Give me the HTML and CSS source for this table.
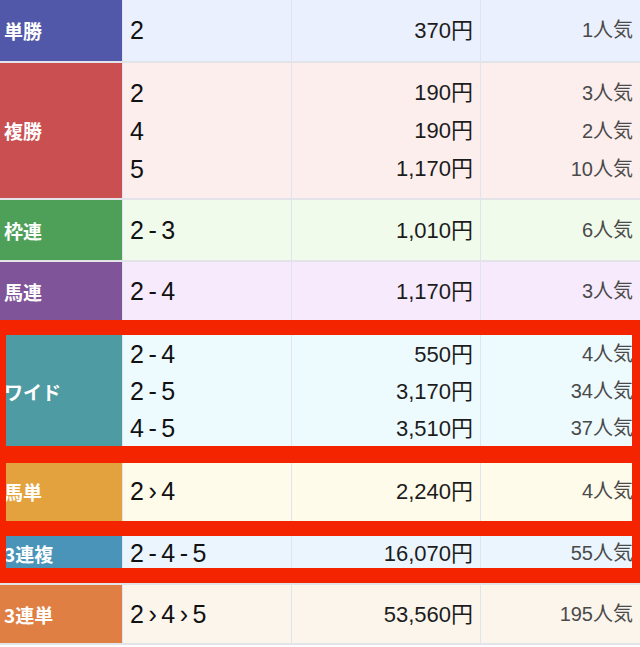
FILE: index.html
```html
<!DOCTYPE html>
<html lang="ja">
<head>
<meta charset="utf-8">
<title>払戻金</title>
<link rel="stylesheet" href="styles.css">
</head>
<body>
<div class="page">
  <div class="table">
    <div class="row r-tansho">
      <div class="label">単勝</div>
      <div class="cell combo"><div>2</div></div>
      <div class="cell pay"><div>370円</div></div>
      <div class="cell pop"><div>1人気</div></div>
    </div>
    <div class="row r-fukusho">
      <div class="label">複勝</div>
      <div class="cell combo"><div>2</div><div>4</div><div>5</div></div>
      <div class="cell pay"><div>190円</div><div>190円</div><div>1,170円</div></div>
      <div class="cell pop"><div>3人気</div><div>2人気</div><div>10人気</div></div>
    </div>
    <div class="row r-wakuren">
      <div class="label">枠連</div>
      <div class="cell combo"><div>2-3</div></div>
      <div class="cell pay"><div>1,010円</div></div>
      <div class="cell pop"><div>6人気</div></div>
    </div>
    <div class="row r-umaren">
      <div class="label">馬連</div>
      <div class="cell combo"><div>2-4</div></div>
      <div class="cell pay"><div>1,170円</div></div>
      <div class="cell pop"><div>3人気</div></div>
    </div>
    <div class="row r-wide">
      <div class="label">ワイド</div>
      <div class="cell combo"><div>2-4</div><div>2-5</div><div>4-5</div></div>
      <div class="cell pay"><div>550円</div><div>3,170円</div><div>3,510円</div></div>
      <div class="cell pop"><div>4人気</div><div>34人気</div><div>37人気</div></div>
    </div>
    <div class="row r-umatan">
      <div class="label">馬単</div>
      <div class="cell combo"><div>2›4</div></div>
      <div class="cell pay"><div>2,240円</div></div>
      <div class="cell pop"><div>4人気</div></div>
    </div>
    <div class="row r-sanpuku">
      <div class="label">3連複</div>
      <div class="cell combo"><div>2-4-5</div></div>
      <div class="cell pay"><div>16,070円</div></div>
      <div class="cell pop"><div>55人気</div></div>
    </div>
    <div class="row r-santan">
      <div class="label">3連単</div>
      <div class="cell combo"><div>2›4›5</div></div>
      <div class="cell pay"><div>53,560円</div></div>
      <div class="cell pop"><div>195人気</div></div>
    </div>
  </div>
  <div class="marks">
    <div class="bar bar-top"></div>
    <div class="hole hole-wide"></div>
    <div class="bar bar-mid1"></div>
    <div class="hole hole-umatan"></div>
    <div class="bar bar-mid2"></div>
    <div class="hole hole-sanpuku"></div>
    <div class="bar bar-bottom"></div>
  </div>
</div>
</body>
</html>
```
FILE: styles.css
```css
html, body {
  margin: 0;
  padding: 0;
  background: #ffffff;
}

.page {
  position: relative;
  width: 640px;
  height: 647px;
  overflow: hidden;
  font-family: "Liberation Sans", "Noto Sans CJK JP", sans-serif;
}

.table {
  display: flex;
  flex-direction: column;
  gap: 2px;
  background: #e3e4ea;
  padding-bottom: 2px;
}

.row {
  display: grid;
  grid-template-columns: 122px 168px 188px 159px;
  column-gap: 1px;
  background: #e1e4ee;
}

.label {
  display: flex;
  align-items: center;
  padding-left: 4px;
  color: #ffffff;
  font-family: "Noto Sans CJK JP", sans-serif;
  font-weight: 700;
  font-size: 19px;
  letter-spacing: 0;
}

.label::first-letter {
  font-family: "Liberation Sans", sans-serif;
}

.cell {
  display: flex;
  flex-direction: column;
  justify-content: center;
  line-height: 37px;
}

.combo {
  padding-left: 7px;
  font-size: 25px;
  color: #111111;
  letter-spacing: 4.5px;
}

.pay {
  padding-right: 7px;
  text-align: right;
  font-size: 22px;
  color: #1c1c1c;
}

.pop {
  padding-right: 7px;
  text-align: right;
  font-size: 20px;
  color: #4a4a4a;
}

.r-tansho { height: 61px; }
.r-fukusho { height: 135px; }
.r-fukusho .cell { line-height: 38px; }
.r-wakuren { height: 60px; }
.r-umaren { height: 58px; }
.r-wide { height: 138px; }
.r-umatan { height: 59px; }
.r-sanpuku { height: 60px; }
.r-santan { height: 58px; }

.r-tansho .label { background: #5157a9; }
.r-tansho .cell { background: #eaf0fd; }

.r-fukusho .label { background: #c94f51; }
.r-fukusho .cell { background: #fdeeee; }

.r-wakuren .label { background: #4e9f57; }
.r-wakuren .cell { background: #f0fbeb; }

.r-umaren .label { background: #7f5498; }
.r-umaren .cell { background: #f7eafd; }

.r-wide .label { background: #4f9ba3; }
.r-wide .cell { background: #eefbfe; }

.r-umatan .label { background: #e4a23e; }
.r-umatan .cell { background: #fefbea; }

.r-sanpuku .label { background: #4a93b9; }
.r-sanpuku .cell { background: #ebf5fe; }

.r-santan .label { background: #e07f44; }
.r-santan .cell { background: #fbf5ec; }

/* red annotation frames laid over the table */
.marks {
  position: absolute;
  top: 320px;
  left: 0;
  width: 626px;
  border-left: 6px solid #f42300;
  border-right: 8px solid #f42300;
  display: flex;
  flex-direction: column;
}

.bar { background: #f42300; }
.bar-top { height: 15px; }
.bar-mid1 { height: 17px; }
.bar-mid2 { height: 15px; }
.bar-bottom { height: 15px; }

.hole-wide { height: 111px; }
.hole-umatan { height: 58px; }
.hole-sanpuku { height: 32px; }
```
